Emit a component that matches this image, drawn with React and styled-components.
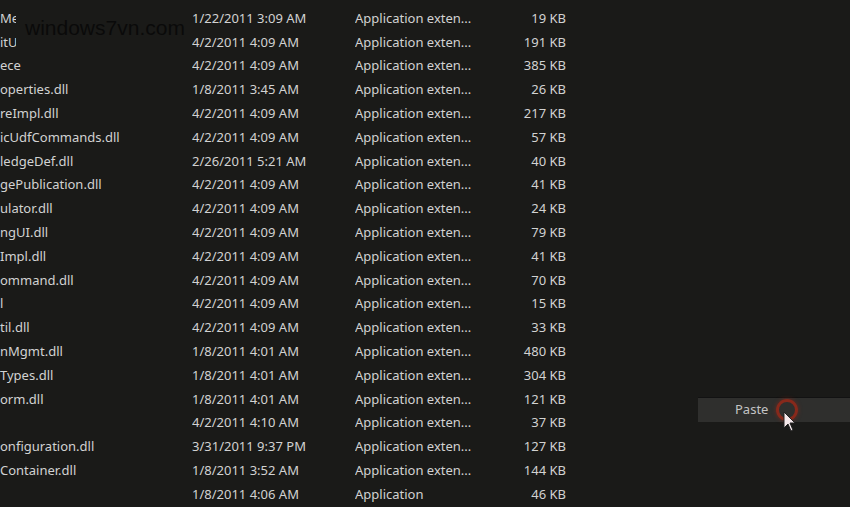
import React from 'react';
import styled, { createGlobalStyle } from 'styled-components';

const GlobalStyle = createGlobalStyle`
  html, body {
    margin: 0;
    padding: 0;
    background: #1a1a18;
    overflow: hidden;
  }
`;

const Page = styled.div`
  position: relative;
  width: 850px;
  height: 507px;
  overflow: hidden;
  background: #1a1a18;
  font-family: 'Noto Sans', 'Open Sans', sans-serif;
  font-size: 13px;
  color: #d2d2d2;
`;

const List = styled.div`
  padding-top: 6px;
  display: grid;
  grid-template-columns: 192px 163px 150px 61px;
  grid-auto-rows: 23.8px;
  align-items: center;
`;

const Cell = styled.div`
  white-space: nowrap;
  overflow: hidden;
  text-align: ${(p) => (p.right ? 'right' : 'left')};
`;

const Watermark = styled.div`
  position: absolute;
  left: 16px;
  top: 6px;
  width: 172px;
  height: 44px;
  background: #1a1a18;
  display: flex;
  align-items: center;
  padding-left: 9px;
  box-sizing: border-box;
  color: #0a0a0a;
  font-family: 'Liberation Sans', Arial, sans-serif;
  font-size: 21px;
`;

const Menu = styled.div`
  position: absolute;
  left: 698px;
  top: 397px;
  right: 0;
  height: 25px;
  background: #2f2f2d;
  border-top: 1px solid #121212;
  display: flex;
  align-items: center;
  gap: 8px;
  padding: 0 0 3px 37px;
  box-sizing: border-box;
  font-size: 13px;
  color: #c4c4c4;
`;

const Pointer = styled.div`
  position: relative;
  width: 22px;
  height: 22px;
  margin-top: 2px;
`;

const Click = styled.div`
  width: 22px;
  height: 22px;
  border-radius: 50%;
  border: 3px solid rgba(150, 40, 25, 0.85);
  box-sizing: border-box;
  box-shadow: 0 0 4px rgba(150, 40, 25, 0.6);
`;

const Cursor = styled.svg`
  position: absolute;
  left: 7px;
  top: 12px;
`;

const rows = [
  ['Mer', '1/22/2011 3:09 AM', 'Application exten...', '19 KB'],
  ['itU', '4/2/2011 4:09 AM', 'Application exten...', '191 KB'],
  ['ece', '4/2/2011 4:09 AM', 'Application exten...', '385 KB'],
  ['operties.dll', '1/8/2011 3:45 AM', 'Application exten...', '26 KB'],
  ['reImpl.dll', '4/2/2011 4:09 AM', 'Application exten...', '217 KB'],
  ['icUdfCommands.dll', '4/2/2011 4:09 AM', 'Application exten...', '57 KB'],
  ['ledgeDef.dll', '2/26/2011 5:21 AM', 'Application exten...', '40 KB'],
  ['gePublication.dll', '4/2/2011 4:09 AM', 'Application exten...', '41 KB'],
  ['ulator.dll', '4/2/2011 4:09 AM', 'Application exten...', '24 KB'],
  ['ngUI.dll', '4/2/2011 4:09 AM', 'Application exten...', '79 KB'],
  ['Impl.dll', '4/2/2011 4:09 AM', 'Application exten...', '41 KB'],
  ['ommand.dll', '4/2/2011 4:09 AM', 'Application exten...', '70 KB'],
  ['l', '4/2/2011 4:09 AM', 'Application exten...', '15 KB'],
  ['til.dll', '4/2/2011 4:09 AM', 'Application exten...', '33 KB'],
  ['nMgmt.dll', '1/8/2011 4:01 AM', 'Application exten...', '480 KB'],
  ['Types.dll', '1/8/2011 4:01 AM', 'Application exten...', '304 KB'],
  ['orm.dll', '1/8/2011 4:01 AM', 'Application exten...', '121 KB'],
  ['', '4/2/2011 4:10 AM', 'Application exten...', '37 KB'],
  ['onfiguration.dll', '3/31/2011 9:37 PM', 'Application exten...', '127 KB'],
  ['Container.dll', '1/8/2011 3:52 AM', 'Application exten...', '144 KB'],
  ['', '1/8/2011 4:06 AM', 'Application', '46 KB'],
];

export default function App() {
  return (
    <Page>
      <GlobalStyle />
      <List>
        {rows.map((r, i) => (
          <React.Fragment key={i}>
            <Cell>{r[0]}</Cell>
            <Cell>{r[1]}</Cell>
            <Cell>{r[2]}</Cell>
            <Cell right>{r[3]}</Cell>
          </React.Fragment>
        ))}
      </List>
      <Watermark>windows7vn.com</Watermark>
      <Menu>
        <span>Paste</span>
        <Pointer>
          <Click />
          <Cursor width="14" height="22" viewBox="0 0 14 22">
            <path d="M1 1 L1 17 L5 13 L8 20 L10 19 L7 12 L12 12 Z" fill="#f4e8ea" stroke="#222" strokeWidth="1" />
          </Cursor>
        </Pointer>
      </Menu>
    </Page>
  );
}
